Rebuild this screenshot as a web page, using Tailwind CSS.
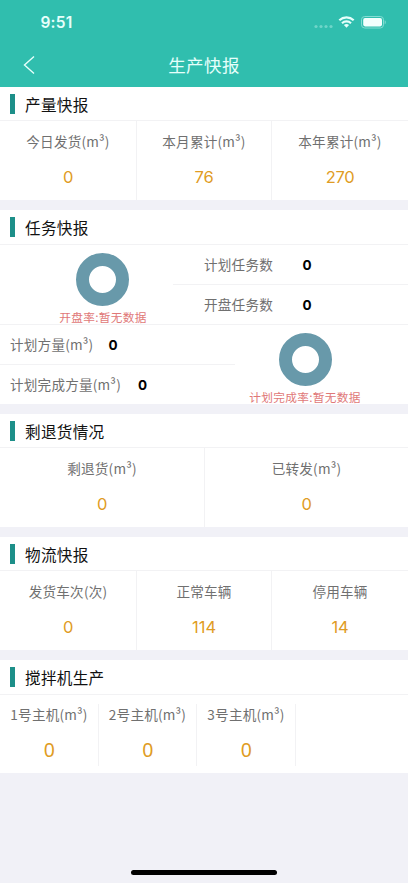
<!DOCTYPE html>
<html lang="zh-CN">
<head>
<meta charset="utf-8">
<meta name="viewport" content="width=device-width, initial-scale=1">
<title>生产快报</title>
<script src="https://cdn.jsdelivr.net/npm/@tailwindcss/browser@4"></script>
</head>
<body class="w-[408px] h-[883px] overflow-hidden bg-[#f1f1f7] font-['Noto_Sans_CJK_SC',sans-serif] text-[13.6px] tracking-[0.2px] text-[#707070] flex flex-col">
<header class="h-[87px] shrink-0 bg-[#30beae] text-[#e6fffb]">
  <div class="h-[44px] flex items-center justify-between pl-[40.5px] pr-[21px]">
    <span class="font-['Inter'] text-[15.5px] font-semibold leading-[20px] tracking-[0.2px] pt-[2px]">9:51</span>
    <svg class="w-[74px] h-[16px]" viewBox="0 0 74 16" fill="none">
      <g fill="#6fd5c9"><circle cx="3" cy="12.5" r="1.6"/><circle cx="8" cy="12.5" r="1.6"/><circle cx="13" cy="12.5" r="1.6"/><circle cx="18" cy="12.5" r="1.6"/></g>
      <g stroke="#e6fffb" stroke-width="2.2"><path d="M26.3 6.2a10.6 10.6 0 0 1 14.4 0"/><path d="M29 9.2a6.6 6.6 0 0 1 9 0"/></g>
      <path d="M30.9 11a4 4 0 0 1 5.2 0l-2.6 2.8z" fill="#e6fffb"/>
      <rect x="48.5" y="2.5" width="22" height="11.5" rx="3.2" stroke="#83ddd3"/>
      <rect x="50.2" y="4.1" width="18.8" height="8.3" rx="1.8" fill="#f2fffd"/>
      <path d="M71.7 6.2c1.5.7 1.5 3.5 0 4.2z" fill="#83ddd3"/>
    </svg>
  </div>
  <div class="h-[43px] grid grid-cols-[60px_1fr_60px] items-center">
    <svg class="w-[12px] h-[20px] ml-[23px] -mt-[2px]" viewBox="0 0 12 20" fill="none" stroke="#e6fffb" stroke-width="1.4"><path d="M11 1.5 1.5 10l9.5 8.5"/></svg>
    <h1 class="text-center text-[17.5px] leading-[24px] tracking-[0.4px] pb-[2px]">生产快报</h1>
  </div>
</header>
<main class="flex flex-col gap-[10px] leading-[20px]">
  <section class="h-[113px] bg-white">
    <div class="h-[34px] border-b border-[#f2f2f4] flex items-center gap-[10px] pl-[10px] pt-[1px]"><i class="w-[5px] h-[20px] bg-[#1d8f89]"></i><h2 class="text-[15.6px] tracking-[0.3px] text-[#111] pb-[1px]">产量快报</h2></div>
    <div class="h-[79px] grid grid-cols-3 text-center">
      <div class="pt-[10px]"><p>今日发货(m³)</p><p class="mt-[16px] font-['Inter'] text-[16.5px] tracking-[-0.2px] text-[#df9c24]">0</p></div>
      <div class="pt-[10px] border-x border-[#f2f2f4]"><p>本月累计(m³)</p><p class="mt-[16px] font-['Inter'] text-[16.5px] tracking-[-0.2px] text-[#df9c24]">76</p></div>
      <div class="pt-[10px]"><p>本年累计(m³)</p><p class="mt-[16px] font-['Inter'] text-[16.5px] tracking-[-0.4px] text-[#df9c24]">270</p></div>
    </div>
  </section>
  <section class="h-[194px] bg-white">
    <div class="h-[35px] border-b border-[#f2f2f4] flex items-center gap-[10px] pl-[10px]"><i class="w-[5px] h-[20px] bg-[#1d8f89]"></i><h2 class="text-[15.6px] tracking-[0.3px] text-[#111]">任务快报</h2></div>
    <div class="h-[80px] flex border-b border-[#f2f2f4]">
      <div class="w-[173px] pl-[33px] pt-[8px] flex flex-col items-center">
        <div class="w-[53px] h-[53px] shrink-0 rounded-full border-[13px] border-[#6899aa] bg-white mr-[1px]"></div>
        <p class="text-[11.7px] leading-[18px] tracking-[0.3px] text-[#df7878] whitespace-nowrap mt-[2px]">开盘率:暂无数据</p>
      </div>
      <div class="flex-1">
        <div class="h-[40px] border-b border-[#f2f2f4] flex items-center pl-[31px]"><span class="w-[98.5px] pb-[2px]">计划任务数</span><b class="font-['Inter'] font-bold text-[13.5px] text-black">0</b></div>
        <div class="h-[39px] flex items-center pl-[31px]"><span class="w-[98.5px] pb-[2px]">开盘任务数</span><b class="font-['Inter'] font-bold text-[13.5px] text-black">0</b></div>
      </div>
    </div>
    <div class="h-[79px] flex">
      <div class="w-[235px]">
        <div class="h-[40px] border-b border-[#f2f2f4] flex items-center pl-[10px]"><span class="w-[98.5px] pb-[2px]">计划方量(m³)</span><b class="font-['Inter'] font-bold text-[13.5px] text-black">0</b></div>
        <div class="h-[39px] flex items-center pl-[10px]"><span class="w-[128px] pb-[2px]">计划完成方量(m³)</span><b class="font-['Inter'] font-bold text-[13.5px] text-black">0</b></div>
      </div>
      <div class="flex-1 pr-[33px] pt-[8px] flex flex-col items-center">
        <div class="w-[53px] h-[53px] shrink-0 rounded-full border-[13px] border-[#6899aa] bg-white ml-[1px]"></div>
        <p class="text-[11.7px] leading-[18px] tracking-[0.3px] text-[#df7878] whitespace-nowrap mt-[2px]">计划完成率:暂无数据</p>
      </div>
    </div>
  </section>
  <section class="h-[113px] bg-white">
    <div class="h-[34px] border-b border-[#f2f2f4] flex items-center gap-[10px] pl-[10px] pt-[1px]"><i class="w-[5px] h-[20px] bg-[#1d8f89]"></i><h2 class="text-[15.6px] tracking-[0.3px] text-[#111] pb-[1px]">剩退货情况</h2></div>
    <div class="h-[79px] grid grid-cols-2 text-center">
      <div class="pt-[10px]"><p>剩退货(m³)</p><p class="mt-[16px] font-['Inter'] text-[16.5px] tracking-[-0.2px] text-[#df9c24]">0</p></div>
      <div class="pt-[10px] border-l border-[#f2f2f4]"><p>已转发(m³)</p><p class="mt-[16px] font-['Inter'] text-[16.5px] tracking-[-0.2px] text-[#df9c24]">0</p></div>
    </div>
  </section>
  <section class="h-[113px] bg-white">
    <div class="h-[34px] border-b border-[#f2f2f4] flex items-center gap-[10px] pl-[10px] pt-[1px]"><i class="w-[5px] h-[20px] bg-[#1d8f89]"></i><h2 class="text-[15.6px] tracking-[0.3px] text-[#111] pb-[1px]">物流快报</h2></div>
    <div class="h-[79px] grid grid-cols-3 text-center">
      <div class="pt-[10px]"><p>发货车次(次)</p><p class="mt-[16px] font-['Inter'] text-[16.5px] tracking-[-0.2px] text-[#df9c24]">0</p></div>
      <div class="pt-[10px] border-x border-[#f2f2f4]"><p>正常车辆</p><p class="mt-[16px] font-['Inter'] text-[16.5px] tracking-[0px] text-[#df9c24]">114</p></div>
      <div class="pt-[10px]"><p>停用车辆</p><p class="mt-[16px] font-['Inter'] text-[16.5px] tracking-[-0.2px] text-[#df9c24]">14</p></div>
    </div>
  </section>
  <section class="h-[113px] bg-white">
    <div class="h-[35px] border-b border-[#f2f2f4] flex items-center gap-[10px] pl-[10px]"><i class="w-[5px] h-[20px] bg-[#1d8f89]"></i><h2 class="text-[15.6px] tracking-[0.3px] text-[#111]">搅拌机生产</h2></div>
    <div class="pt-[9px] flex text-center whitespace-nowrap">
      <div class="w-[99px] h-[62px] border-r border-[#f2f2f4]"><p>1号主机(m³)</p><p class="mt-[16px] pl-[1px] font-['Noto_Sans'] text-[19.5px] text-[#df9c24]">0</p></div>
      <div class="w-[98px] h-[62px] border-r border-[#f2f2f4]"><p>2号主机(m³)</p><p class="mt-[16px] pl-[1px] font-['Noto_Sans'] text-[19.5px] text-[#df9c24]">0</p></div>
      <div class="w-[99px] h-[62px] border-r border-[#f2f2f4]"><p>3号主机(m³)</p><p class="mt-[16px] pl-[1px] font-['Noto_Sans'] text-[19.5px] text-[#df9c24]">0</p></div>
    </div>
  </section>
</main>
<div class="mt-auto mb-[8px] w-[146px] h-[5px] shrink-0 rounded-full bg-black self-center"></div>
</body>
</html>
